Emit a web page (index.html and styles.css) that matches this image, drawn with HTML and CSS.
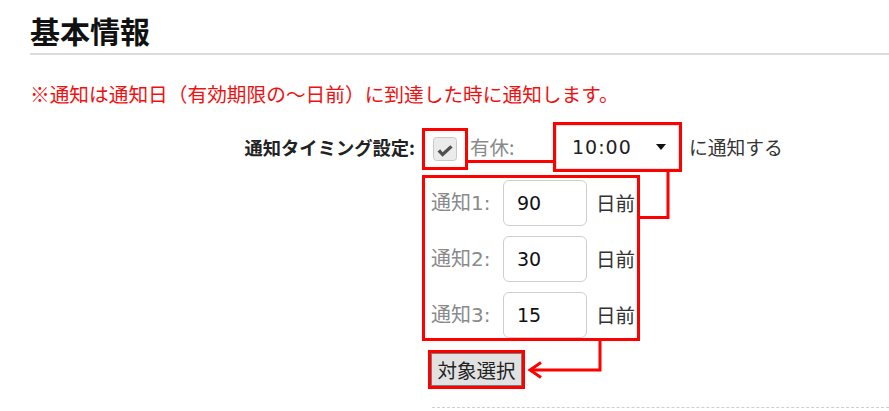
FILE: index.html
```html
<!DOCTYPE html>
<html lang="ja">
<head>
<meta charset="utf-8">
<title>基本情報</title>
<link rel="stylesheet" href="styles.css">
</head>
<body>
<div class="page">
  <h1 class="title">基本情報</h1>
  <p class="note">※通知は通知日（有効期限の～日前）に到達した時に通知します。</p>
  <div class="form">
    <div class="form-label">通知タイミング設定:</div>
    <div class="row-main">
      <span class="mark cb-mark">
        <svg class="cb" width="24" height="24" viewBox="0 0 24 24">
          <rect x="0.5" y="0.5" width="23" height="23" rx="3" fill="#ebebeb" stroke="#c9c9c9"/>
          <path d="M4.5 14.6 L7.2 12.3 L9.6 15.2 L17.3 8.2 L19.6 10.5 L9.6 19.8 Z" fill="#505050"/>
        </svg>
      </span>
      <span class="yukyu">有休:</span>
      <span class="mark sel-mark">
        <span class="select"><span class="sel-val">10:00</span><span class="sel-arrow"></span></span>
      </span>
      <span class="after">に通知する</span>
    </div>
    <div class="form-spacer"></div>
    <div class="group mark">
      <div class="nrow"><span class="nlabel">通知1:</span><span class="input">90</span><span class="unit">日前</span></div>
      <div class="nrow"><span class="nlabel">通知2:</span><span class="input">30</span><span class="unit">日前</span></div>
      <div class="nrow"><span class="nlabel">通知3:</span><span class="input">15</span><span class="unit">日前</span></div>
    </div>
    <div class="form-spacer"></div>
    <div class="btn-wrap">
      <span class="mark btn-mark"><span class="btn">対象選択</span></span>
    </div>
    <div class="form-spacer"></div>
    <div class="dashed"></div>
  </div>
</div>
<svg class="annot" width="889" height="411" viewBox="0 0 889 411">
  <g fill="none" stroke="#ff0000" stroke-width="3">
    <polyline points="468,161.5 553,161.5"/>
    <polyline points="668,172 668,217.5 640,217.5"/>
    <polyline points="600,341 600,370 531,370"/>
    <polyline points="541,362.5 530,370 541,377.5"/>
  </g>
</svg>
</body>
</html>
```
FILE: styles.css
```css
html, body {
  margin: 0;
  padding: 0;
  background: #fff;
}
body {
  position: relative;
  width: 889px;
  height: 411px;
  overflow: hidden;
  font-family: "DejaVu Sans", "Noto Sans CJK JP", sans-serif;
  color: #222;
}
.page {
  padding-left: 30px;
}
.title {
  margin: 0;
  padding: 11px 0 4px;
  font-family: "Noto Sans CJK JP", sans-serif;
  font-size: 30px;
  line-height: 38px;
  font-weight: 700;
  color: #111;
  border-bottom: 2px solid #dcdcdc;
}
.note {
  margin: 25px 0 0;
  font-family: "Noto Sans CJK JP", sans-serif;
  font-size: 19.7px;
  line-height: 28px;
  color: #f01010;
}
.form {
  margin-top: 14px;
  display: grid;
  grid-template-columns: 392px auto;
  align-items: start;
}
.form-label {
  height: 50px;
  line-height: 50px;
  text-align: right;
  padding-right: 7px;
  font-family: "Noto Sans CJK JP", sans-serif;
  font-weight: 700;
  font-size: 18.3px;
  color: #222;
  white-space: nowrap;
}
.mark {
  border: 3px solid #ff0000;
  box-sizing: border-box;
}
.row-main {
  display: flex;
  align-items: center;
  height: 50px;
}
.cb-mark {
  width: 46px;
  height: 42px;
  margin-top: 4px;
  display: flex;
  align-items: center;
  justify-content: center;
}
.cb { display: block; }
.yukyu {
  width: 83px;
  padding-left: 2px;
  font-family: "Noto Sans CJK JP", sans-serif;
  font-size: 19.5px;
  color: #8a8a8a;
  line-height: 24px;
}
.sel-mark {
  width: 129px;
  height: 50px;
  display: flex;
}
.select {
  flex: 1;
  display: flex;
  align-items: center;
  background: #fff;
  border: 1px solid #e3e3e3;
  padding-left: 15px;
}
.sel-val {
  font-size: 19px;
  letter-spacing: 1px;
  color: #222;
}
.sel-arrow {
  margin-left: 24px;
  width: 0;
  height: 0;
  border-left: 5.5px solid transparent;
  border-right: 5.5px solid transparent;
  border-top: 6px solid #111;
}
.after {
  margin-left: 7px;
  font-family: "Noto Sans CJK JP", sans-serif;
  font-size: 18.8px;
  color: #333;
  line-height: 24px;
}
.form-spacer { height: 0; }
.group {
  margin-top: 3px;
  width: 218px;
  padding: 2px 0 0 6px;
  display: flex;
  flex-direction: column;
  gap: 10px;
}
.nrow {
  display: flex;
  align-items: center;
  height: 46px;
}
.nlabel {
  width: 72px;
  font-size: 20px;
  color: #8a8a8a;
  line-height: 24px;
  white-space: nowrap;
}
.input {
  width: 84px;
  height: 46px;
  box-sizing: border-box;
  border: 1px solid #cfcfcf;
  border-radius: 6px;
  padding-left: 13px;
  display: flex;
  align-items: center;
  font-size: 19px;
  color: #111;
}
.unit {
  margin-left: 9px;
  font-family: "Noto Sans CJK JP", sans-serif;
  font-size: 19.5px;
  color: #333;
  line-height: 24px;
}
.btn-wrap {
  margin-top: 9px;
  padding-left: 6px;
  display: flex;
}
.btn-mark {
  width: 97px;
  height: 39px;
  display: flex;
}
.btn {
  flex: 1;
  display: flex;
  align-items: center;
  justify-content: center;
  background: #e1e1e1;
  border: 1px solid #7a7a7a;
  font-family: "Noto Sans CJK JP", sans-serif;
  font-size: 19.5px;
  color: #222;
}
.dashed {
  margin-top: 18px;
  margin-left: 10px;
  border-top: 1px dashed #cfcfcf;
}
.annot {
  position: absolute;
  top: 0;
  left: 0;
  pointer-events: none;
}
```
